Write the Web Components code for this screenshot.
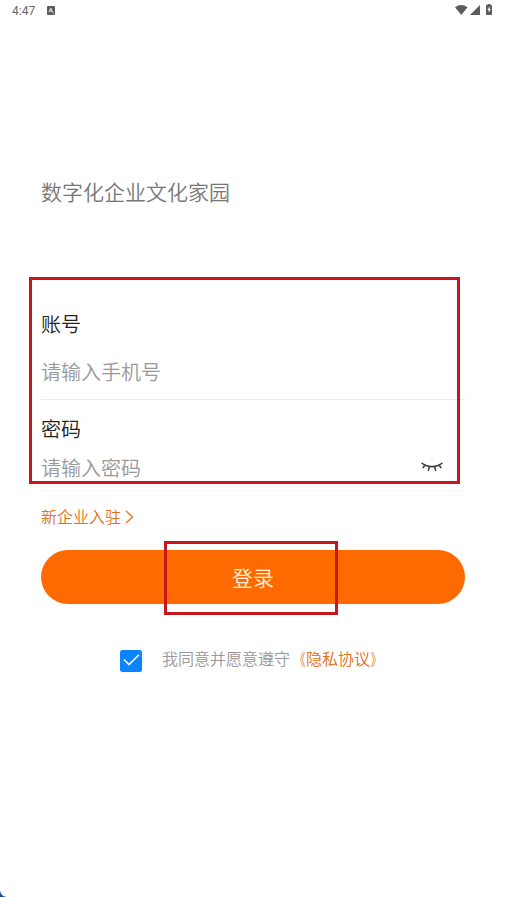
<!DOCTYPE html>
<html lang="zh-CN">
<head>
<meta charset="utf-8">
<title>登录</title>
<style>
body{margin:0;background:#fff;font-family:"Noto Sans CJK SC",sans-serif;font-weight:350;overflow:hidden}
</style>
</head>
<body>
<login-screen></login-screen>
<script>
function define(name, html) {
  const t = document.createElement('template');
  t.innerHTML = html;
  customElements.define(name, class extends HTMLElement {
    constructor() {
      super();
      this.attachShadow({ mode: 'open' }).append(t.content.cloneNode(true));
    }
  });
}

define('status-bar', `
<style>
:host{display:flex;height:20px;padding:1px 11px 0 12px;box-sizing:border-box;align-items:center;color:#666;font:12px/20px Roboto,sans-serif}
svg{display:block}
.note{margin-left:12px}
.right{margin:-1px 0 0 auto}
</style>
<span>4:47</span>
<svg class="note" width="8" height="9" viewBox="0 0 8 9"><rect width="8" height="9" rx="1" fill="#5c5c5c"/><path d="M2 6.2 3.8 2.2 5.6 6.2M2.8 5h2.1M5.6 7h1" fill="none" stroke="#fff" stroke-width=".9"/></svg>
<svg class="right" width="39" height="12" viewBox="0 0 39 12" fill="#5c5c5c"><path d="M0 3.3Q6.3-1.3 12.5 3.3L6.3 11Z"/><path d="M25 1V11H15Z"/><path d="M32.5 1V0h3v1h.7q.8 0 .8.8v8.4q0 .8-.8.8h-4.4q-.8 0-.8-.8V1.8q0-.8.8-.8Z"/><path d="M34.7 2.2 32.4 6H33.7V8.8L35.8 5.1H34.6Z" fill="#fff"/></svg>`);

define('form-field', `
<style>
:host{display:flex;flex-direction:column;border-bottom:1px solid var(--line,#ececec);box-sizing:border-box}
.label{color:#222;font-size:20px;line-height:30px}
.row{display:flex;align-items:center;justify-content:space-between;margin-top:var(--gap,17px);color:#999;font-size:20px;line-height:30px;padding-right:22px}
</style>
<div class="label"><slot name="label"></slot></div>
<div class="row"><slot></slot><slot name="icon"></slot></div>`);

define('closed-eye', `
<style>:host{display:block;height:12px;margin-top:-2px}svg{display:block}</style>
<svg width="22" height="12" viewBox="0 0 22 12" fill="none" stroke="#333" stroke-width="1.5"><path d="M.5 2Q11 9.5 21.5 2M3.8 4.3 1.8 7M8.2 6.3 7.2 9.8M13.8 6.3 14.8 9.8M18.2 4.3 20.2 7"/></svg>`);

define('enterprise-link', `
<style>:host{display:flex;align-items:center;color:#e2701a;font-size:16px;line-height:24px}svg{margin:1px 0 0 4px}</style>
<slot></slot><svg width="9" height="14" viewBox="0 0 9 14" fill="none" stroke="currentColor" stroke-width="1.2"><path d="M1 1 7.5 7 1 13"/></svg>`);

define('primary-button', `
<style>:host{display:flex;align-items:center;justify-content:center;height:54px;border-radius:27px;background:#ff6a00;color:#fff3dc;font-size:21px;line-height:30px;box-sizing:border-box}</style>
<slot></slot>`);

define('agreement-row', `
<style>
:host{display:flex;align-items:flex-start;color:#999;font-size:16px;line-height:24px}
.box{width:22px;height:22px;border-radius:2.5px;background:#0a84ff;margin:4px 20px 0 0}
svg{display:block}
.policy{color:#e2701a}
</style>
<div class="box"><svg width="22" height="22" viewBox="0 0 22 22" fill="none" stroke="#fff" stroke-width="1.5"><path d="M4 9.5 9 14.6 19 4.8"/></svg></div>
<span><slot></slot></span><span class="policy"><slot name="policy"></slot></span>`);

/* Annotation frame drawn over the form */
define('mark-frame', `
<style>:host{display:block;position:absolute;box-sizing:border-box;border:3px solid #c8161d;pointer-events:none}</style>`);

define('login-screen', `
<style>
:host{display:block;position:relative;height:897px;overflow:hidden;background:#fff}
main{display:flex;flex-direction:column;padding:0 40px 0 41px}
h1{margin:156px 0 0;font-weight:350;font-size:21px;line-height:30px;color:#777}
.account{margin-top:103px;height:91px}
.password{margin-top:14px;height:77px;--gap:9px;--line:#f5f6f8}
.account{--gap:18px}
enterprise-link{margin-top:13px}
primary-button{margin-top:22px}
agreement-row{margin:42px 0 0 79px}
.form{left:29px;top:277px;width:431px;height:207px}
.submit{left:164px;top:541px;width:174px;height:74px}
.corner{position:absolute;left:0;bottom:0;display:block}
.cut{display:inline-block;transform:scaleX(.66)}
.open{transform-origin:14px 50%}
.close{transform-origin:2px 50%}
</style>
<status-bar></status-bar>
<main>
<h1>数字化企业文化家园</h1>
<form-field class="account"><span slot="label">账号</span>请输入手机号</form-field>
<form-field class="password"><span slot="label">密码</span>请输入密码<closed-eye slot="icon"></closed-eye></form-field>
<enterprise-link>新企业入驻</enterprise-link>
<primary-button>登录</primary-button>
<agreement-row>我同意并愿意遵守<span slot="policy"><span class="cut open">《</span>隐私协议<span class="cut close">》</span></span></agreement-row>
</main>
<mark-frame class="form"></mark-frame>
<mark-frame class="submit"></mark-frame>
<svg class="corner" width="7" height="7" viewBox="0 0 7 7"><path d="M0 0Q.5 6 6.5 7H0Z" fill="#1c4f9c"/></svg>`);
</script>
</body>
</html>
